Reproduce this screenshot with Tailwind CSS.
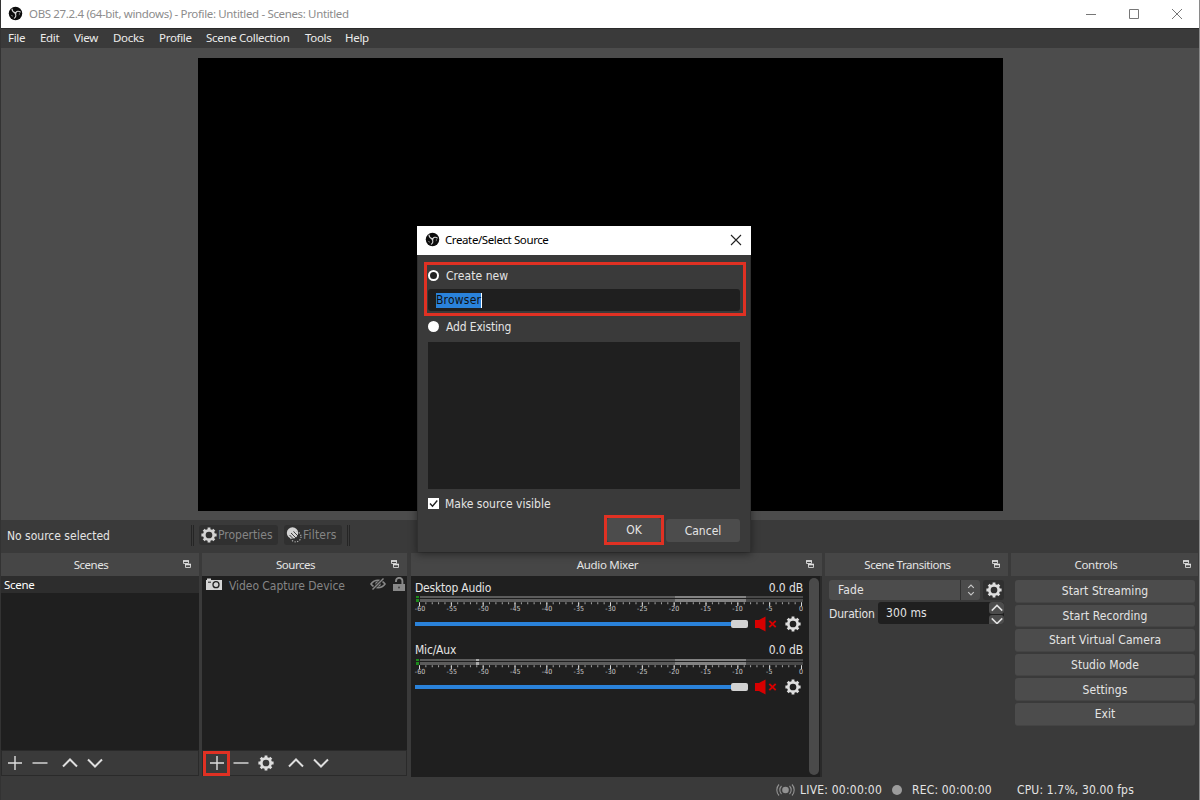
<!DOCTYPE html>
<html lang="en">
<head>
<meta charset="utf-8">
<title>OBS 27.2.4</title>
<script src="https://cdn.jsdelivr.net/npm/@tailwindcss/browser@4"></script>
</head>
<body class="w-[1200px] h-[800px] overflow-hidden bg-[#3a3a3a] font-['DejaVu_Sans_Condensed','DejaVu_Sans',sans-serif] [font-stretch:condensed] text-[12px] leading-4 text-[#e4e4e4] whitespace-nowrap cursor-default">
<svg width="0" height="0" class="absolute">
  <defs>
    <symbol id="gear" viewBox="0 0 16 16"><circle cx="8" cy="8" r="4.700" fill="none" stroke="currentColor" stroke-width="2.700"/><g stroke="currentColor" stroke-width="2.800"><path d="M8 .4v3M8 12.600v3M.4 8h3M12.600 8h3M2.700 2.700l2.100 2.100M11.200 11.200l2.100 2.100M2.700 13.300l2.100-2.100M11.200 4.800l2.100-2.100"/></g></symbol>
    <symbol id="obs" viewBox="0 0 16 16"><circle cx="8" cy="8" r="7.200" fill="#0c0c0c"/><g fill="none" stroke="#d8d8d8" stroke-width="1.200" stroke-linecap="round"><path d="M4.300 3.300c.1 2 1.200 3.500 3.400 3.900M8.200 7.300c1-1.900 3-2.200 4.900-1M7.700 8.200c1.300 1.800.6 3.700-.9 4.700"/></g><circle cx="8" cy="7.500" r="1.100" fill="#d8d8d8"/><path d="M3.300 9.500a2.200 2.200 0 0 0 2 1.300" fill="none" stroke="#999" stroke-width=".8"/><path d="M11.800 9.800a2.300 2.300 0 0 0 .3-2.200" fill="none" stroke="#999" stroke-width=".8"/></symbol>
    <symbol id="float" viewBox="0 0 8 8"><path d="M.5 1h5v2.500h-5z" fill="#464646" stroke="#c8c8c8"/><path d="M0 1h6" stroke="#e0e0e0" stroke-width="1.600"/><path d="M2.500 4.500h5v3h-5z" fill="#464646" stroke="#c8c8c8"/><path d="M2 4.500h6" stroke="#e0e0e0" stroke-width="1.600"/></symbol>
    <symbol id="plus" viewBox="0 0 16 16"><path d="M8 1v14M1 8h14" stroke="currentColor" stroke-width="1.400"/></symbol>
    <symbol id="minus" viewBox="0 0 16 16"><path d="M.5 8h15" stroke="currentColor" stroke-width="1.400"/></symbol>
    <symbol id="up" viewBox="0 0 16 16"><path d="M1 11.500l7-7 7 7" fill="none" stroke="currentColor" stroke-width="2"/></symbol>
    <symbol id="down" viewBox="0 0 16 16"><path d="M1 4.500l7 7 7-7" fill="none" stroke="currentColor" stroke-width="2"/></symbol>
    <symbol id="muted" viewBox="0 0 24 16"><path d="M1 4h4L11.500.5v15L5 12H1z" fill="#d80000"/><path d="M15.300 4.800l6.400 6.400M21.700 4.800l-6.400 6.400" stroke="#d80000" stroke-width="1.900"/></symbol>
    <symbol id="ticks" viewBox="0 0 390 6"><path d="M4 1.200h384" stroke="#a8a8a8" stroke-width="2" stroke-dasharray="1 5.367"/><path d="M4 2.200h384" stroke="#dcdcdc" stroke-width="3.400" stroke-dasharray="1 30.833"/></symbol>
  </defs>
</svg>
<div class="relative flex flex-col w-[1200px] h-[800px] border-l border-r border-l-[#333] border-r-[#8a8a8a]">
  <header class="flex items-center h-7 shrink-0 bg-white pl-[7px] pb-px font-['Noto_Sans',sans-serif] text-[11.5px] tracking-[-0.35px] text-[#8c8c8c]">
    <svg class="size-[15px] mr-[6px]"><use href="#obs"/></svg>
    <span class="pt-px">OBS 27.2.4 (64-bit, windows) - Profile: Untitled - Scenes: Untitled</span>
    <div class="ml-auto flex items-center gap-[31px] pr-4">
      <svg class="w-3 h-3" viewBox="0 0 12 12"><path d="M1 6.500h10" stroke="#777"/></svg>
      <svg class="w-3 h-3" viewBox="0 0 12 12"><path d="M1.500 1.500h9v9h-9z" fill="none" stroke="#777"/></svg>
      <svg class="w-3 h-3" viewBox="0 0 12 12"><path d="M1 1l10 10M11 1L1 11" stroke="#777"/></svg>
    </div>
  </header>
  <nav class="flex items-center h-5 shrink-0 border-t border-[#2a2a2a] bg-[#3a3a3a] pl-[7px] pb-px font-['Noto_Sans',sans-serif] text-[11.5px] tracking-[-0.3px] text-[#ececec]">
    <span class="w-8">File</span><span class="w-[34px]">Edit</span><span class="w-[39px]">View</span><span class="w-[46px]">Docks</span><span class="w-[47px]">Profile</span><span class="w-[99px]">Scene Collection</span><span class="w-10">Tools</span><span>Help</span>
  </nav>
  <main class="h-[472px] shrink-0 bg-[#4c4c4c] pl-[197px] pt-[10px]"><div class="w-[805px] h-[453px] bg-black"></div></main>

  <section class="flex items-center h-[33px] shrink-0 pl-[6px] pb-[3px]">
    <span class="w-[184px] pt-px">No source selected</span>
    <i class="w-[3px] h-[21px] border-x border-[#252525] mr-[5px]"></i>
    <div class="flex items-center w-[79px] h-5 rounded-[3px] bg-[#303030] pl-0.5 text-[#858585]"><svg class="size-4 mr-px text-[#d4d4d4]"><use href="#gear"/></svg>Properties</div>
    <div class="flex items-center w-[58px] h-5 rounded-[3px] bg-[#303030] ml-[6px] pl-[2px] text-[#858585] tracking-[0.2px]">
      <svg class="size-4 mr-px" viewBox="0 0 16 16"><circle cx="6.500" cy="6" r="5.700" fill="#d4d4d4"/><circle cx="9.800" cy="9.700" r="5.200" fill="none" stroke="#b5b5b5" stroke-width="1.200" stroke-dasharray="1.200 1.500"/><path d="M5 6l5.500 5.500M7.500 4.500l4.500 4.500M3.500 8l4 4" stroke="#303030" stroke-width=".9"/></svg>Filters</div>
    <i class="w-[3px] h-[21px] border-x border-[#252525] ml-[5px]"></i>
  </section>

  <div class="flex h-[224px] shrink-0">
    <section class="flex flex-col w-[198px] mr-[3px]">
      <h2 class="relative flex items-center justify-center h-[23px] shrink-0 bg-[#464646] pr-[18px] font-['Noto_Sans',sans-serif] text-[11.5px] tracking-[-0.45px]">Scenes<svg class="absolute right-[8px] top-[7px] size-2"><use href="#float"/></svg></h2>
      <div class="h-[174px] bg-[#1f1f1f]"><div class="h-[17px] leading-[18px] bg-[#2d2d2d] pl-[3px] font-['Noto_Sans',sans-serif] text-[11.5px] tracking-[-0.3px] text-white">Scene</div></div>
      <div class="flex items-center h-[26px] border border-[#2a2a2a] pl-[5px] text-[#dedede]"><svg class="size-4 mr-[9px]"><use href="#plus"/></svg><svg class="size-4 mr-[14px]"><use href="#minus"/></svg><svg class="size-4 mr-[9px]"><use href="#up"/></svg><svg class="size-4"><use href="#down"/></svg></div>
    </section>
    <section class="flex flex-col w-[205px] mr-1">
      <h2 class="relative flex items-center justify-center h-[23px] shrink-0 bg-[#464646] pr-[18px] font-['Noto_Sans',sans-serif] text-[11.5px] tracking-[-0.5px]">Sources<svg class="absolute right-[8px] top-[7px] size-2"><use href="#float"/></svg></h2>
      <div class="h-[174px] bg-[#1f1f1f]"><div class="flex items-center h-[18px] pl-1 text-[#858585]">
        <svg class="w-4 h-3 mr-[7px] -mt-0.5" viewBox="0 0 16 12"><path d="M0 2h1V.5h4V2h11v10H0z" fill="#d4d4d4"/><circle cx="10" cy="6.700" r="3" fill="#d4d4d4" stroke="#222" stroke-width="1.300"/><path d="M2 4.200h3" stroke="#222"/></svg>
        <span class="mt-0.5 tracking-[-0.05px]">Video Capture Device</span>
        <svg class="w-4 h-3 ml-auto mr-[7px] -mt-0.5" viewBox="0 0 16 12"><path d="M1 6c3.500-5 10.500-5 14 0-3.500 5-10.500 5-14 0z" fill="none" stroke="#888" stroke-width="1.600"/><circle cx="8" cy="6" r="2.700" fill="#888"/><path d="M2.500 11.500l11-11" stroke="#1f1f1f" stroke-width="3"/><path d="M2.500 11.500l11-11" stroke="#888" stroke-width="1.400"/></svg>
        <svg class="w-3 h-[14px] mr-[2px] -mt-0.5" viewBox="0 0 12 14"><path d="M0 7h12v7H0z" fill="#888"/><path d="M3 5V4a3.200 3.200 0 0 1 6.400 0v4" fill="none" stroke="#888" stroke-width="1.900"/><circle cx="6" cy="10.500" r="1" fill="#444"/></svg>
      </div></div>
      <div class="flex items-center h-[26px] border border-[#2a2a2a] text-[#dedede]"><div class="flex items-center justify-center w-[27px] h-[25px] shrink-0 border-[3px] border-[#e03123]"><svg class="size-4 shrink-0"><use href="#plus"/></svg></div><svg class="size-4 ml-[3px] mr-[9px]"><use href="#minus"/></svg><svg class="size-4 mr-[14px]"><use href="#gear"/></svg><svg class="size-4 mr-[9px]"><use href="#up"/></svg><svg class="size-4"><use href="#down"/></svg></div>
    </section>
    <section class="flex flex-col w-[411px] mr-[3px]">
      <h2 class="relative flex items-center justify-center h-[23px] shrink-0 bg-[#464646] pr-[18px] font-['Noto_Sans',sans-serif] text-[11.5px] tracking-[-0.3px]">Audio Mixer<svg class="absolute right-[8px] top-[7px] size-2"><use href="#float"/></svg></h2>
      <div class="relative flex justify-between h-[201px] bg-[#1f1f1f] border-r-2 border-[#2a2a2a] pl-1 pr-px">
        <div class="w-[388px] pt-[3px]">
          <div class="h-[62.5px]">
            <div class="flex justify-between h-[17px] leading-[18px]"><span class="tracking-[-0.2px]">Desktop Audio</span><span class="tracking-[-0.1px]">0.0 dB</span></div>
            <svg class="block w-[388px] h-[6px]" viewBox="0 0 388 6" shape-rendering="crispEdges"><path d="M1 0h3v2H1zM1 3h3v3H1z" fill="#1c8a1c"/><path d="M5 0h255v2H5zM5 3h255v3H5z" fill="#5c5c5c"/><path d="M260 0h71v2h-71zM260 3h71v3h-71z" fill="#828282"/><path d="M331 0h57v2h-57zM331 3h57v3h-57z" fill="#484848"/></svg>
            <svg class="block w-[390px] h-[6px] overflow-visible"><use href="#ticks"/></svg>
            <div class="flex justify-between pl-[5px] pr-[2px] -mt-[2px] h-[7px] leading-[7px] text-[7px] text-[#c8c8c8] [&>span]:w-0 [&>span]:flex [&>span]:justify-center"><span>-60</span><span>-55</span><span>-50</span><span>-45</span><span>-40</span><span>-35</span><span>-30</span><span>-25</span><span>-20</span><span>-15</span><span>-10</span><span>-5</span><span>0</span></div>
            <div class="flex items-center h-4 mt-[3px]"><i class="w-[316px] h-1 bg-[#2a82da]"></i><i class="w-[17px] h-2 rounded-[2px] bg-[#d2d2d2]"></i><svg class="w-6 h-4 ml-1.5"><use href="#muted"/></svg><svg class="size-4 ml-[7px] text-[#dedede]"><use href="#gear"/></svg></div>
          </div>
          <div class="h-[62.5px]">
            <div class="flex justify-between h-[17px] leading-[17px]"><span class="tracking-[-0.2px]">Mic/Aux</span><span class="tracking-[-0.1px]">0.0 dB</span></div>
            <svg class="block w-[388px] h-[6px]" viewBox="0 0 388 6" shape-rendering="crispEdges"><path d="M1 0h3v2H1zM1 3h3v3H1z" fill="#1c8a1c"/><path d="M5 0h255v2H5zM5 3h255v3H5z" fill="#5c5c5c"/><path d="M260 0h71v2h-71zM260 3h71v3h-71z" fill="#828282"/><path d="M331 0h57v2h-57zM331 3h57v3h-57z" fill="#484848"/><path d="M61 0h3v2h-3zM61 3h3v3h-3z" fill="#ababab"/></svg>
            <svg class="block w-[390px] h-[6px] overflow-visible"><use href="#ticks"/></svg>
            <div class="flex justify-between pl-[5px] pr-[2px] -mt-[2px] h-[7px] leading-[7px] text-[7px] text-[#c8c8c8] [&>span]:w-0 [&>span]:flex [&>span]:justify-center"><span>-60</span><span>-55</span><span>-50</span><span>-45</span><span>-40</span><span>-35</span><span>-30</span><span>-25</span><span>-20</span><span>-15</span><span>-10</span><span>-5</span><span>0</span></div>
            <div class="flex items-center h-4 mt-[3px]"><i class="w-[316px] h-1 bg-[#2a82da]"></i><i class="w-[17px] h-2 rounded-[2px] bg-[#d2d2d2]"></i><svg class="w-6 h-4 ml-1.5"><use href="#muted"/></svg><svg class="size-4 ml-[7px] text-[#dedede]"><use href="#gear"/></svg></div>
          </div>
        </div>
        <i class="w-[10px] h-[197px] mt-[2px] rounded-full bg-[#4a4a4a]"></i>
      </div>
    </section>
    <section class="flex flex-col w-[183px] mr-[3px]">
      <h2 class="relative flex items-center justify-center h-[23px] shrink-0 bg-[#464646] pr-[18px] font-['Noto_Sans',sans-serif] text-[11.5px] tracking-[-0.45px]">Scene Transitions<svg class="absolute right-[8px] top-[7px] size-2"><use href="#float"/></svg></h2>
      <div class="flex pt-1 pl-1">
        <div class="flex items-center w-[151px] h-5 rounded-[3px] bg-[#4c4c4c] pl-[9px] tracking-[0.1px]">Fade<div class="ml-auto flex items-center justify-center w-5 h-5 border-l border-[#303030]"><svg class="w-2 h-3" viewBox="0 0 8 12"><path d="M1.200 3.800L4 1l2.800 2.800M1.200 8.200L4 11l2.800-2.800" fill="none" stroke="#c8c8c8" stroke-width="1.100"/></svg></div></div>
        <div class="flex items-center justify-center w-[21px] h-5 ml-[3px] rounded-[3px] bg-[#303030] text-[#dedede]"><svg class="size-4"><use href="#gear"/></svg></div>
      </div>
      <div class="flex items-center pt-[2px] pl-1"><span class="w-[49px] tracking-[-0.15px] mt-0.5">Duration</span>
        <div class="flex items-center w-[126px] h-[22px] rounded-[3px] bg-[#1f1f1f] pl-[8px] overflow-hidden tracking-[0.1px]">300 ms<div class="ml-auto flex flex-col gap-px w-[15px] h-[22px] text-[#e0e0e0]"><div class="flex items-center justify-center flex-1 rounded-[3px] bg-[#4c4c4c]"><svg class="size-3"><use href="#up"/></svg></div><div class="flex items-center justify-center flex-1 rounded-[3px] bg-[#4c4c4c]"><svg class="size-3"><use href="#down"/></svg></div></div></div>
      </div>
    </section>
    <section class="flex flex-col w-[187px]">
      <h2 class="relative flex items-center justify-center h-[23px] shrink-0 bg-[#464646] pr-[17px] font-['Noto_Sans',sans-serif] text-[11.5px] tracking-[-0.3px]">Controls<svg class="absolute right-[7px] top-[7px] size-2"><use href="#float"/></svg></h2>
      <div class="flex flex-col gap-[2px] pt-1 pl-1 pr-[3px] *:flex *:items-center *:justify-center *:h-[22.6px] *:pt-px *:rounded-[3px] *:bg-[#4c4c4c] *:border-b *:border-[#444] tracking-[0.07px]">
        <div>Start Streaming</div><div>Start Recording</div><div>Start Virtual Camera</div><div>Studio Mode</div><div>Settings</div><div>Exit</div>
      </div>
    </section>
  </div>

  <footer class="flex items-center flex-1 pt-[3px] pl-[775px]">
    <svg class="w-[19px] h-3 mr-[5px]" viewBox="0 0 19 12" fill="none" stroke="#929292"><circle cx="9.500" cy="6" r="3.300" fill="#929292" stroke="none"/><path d="M5.500 2a5.600 5.600 0 0 0 0 8M3 .5a8 8 0 0 0 0 11M13.500 2a5.600 5.600 0 0 1 0 8M16 .5a8 8 0 0 1 0 11" stroke-width="1.100"/></svg>
    <span class="w-[92px] tracking-[0.22px]">LIVE: 00:00:00</span>
    <i class="size-[10px] mr-[10px] rounded-full bg-[#9c9c9c]"></i>
    <span class="w-[105px] tracking-[0.18px]">REC: 00:00:00</span>
    <span class="tracking-[0.15px]">CPU: 1.7%, 30.00 fps</span>
  </footer>

  <div class="absolute left-[416px] top-[226px] flex flex-col w-[334px] h-[326px] bg-[#3a3a3a] border-x border-[#303030] shadow-[0_2px_8px_rgba(0,0,0,0.45)]">
    <div class="flex items-center h-[29px] -mx-px shrink-0 bg-white pl-2 pr-[9px] pb-[2px] font-['Noto_Sans',sans-serif] text-[11.5px] tracking-[-0.4px] text-black"><svg class="size-[15px] mr-[5px]"><use href="#obs"/></svg><span class="pt-px">Create/Select Source</span><svg class="size-3 ml-auto" viewBox="0 0 12 12"><path d="M1 1l10 10M11 1L1 11" stroke="#222" stroke-width="1.100"/></svg></div>
    <div class="flex flex-col shrink-0 w-[322px] h-[54px] ml-1.5 mt-[7px] border-[3px] border-[#e03123] pl-px">
      <div class="flex items-center h-[21px] shrink-0 tracking-[0.05px]"><i class="size-[11px] mr-[7px] mb-px rounded-full border-[2.5px] border-white bg-[#222]"></i>Create new</div>
      <div class="flex items-center w-[312px] h-[22px] mt-[3px] rounded-[3px] bg-[#1f1f1f] pl-2"><span class="h-[15px] leading-[15px] bg-[#2a82da] text-[#101010] tracking-[0.2px] border-r border-white">Browser</span></div>
    </div>
    <div class="flex items-center h-[22px] shrink-0 ml-[10px] tracking-[-0.15px]"><i class="size-[11px] mr-[7px] mb-px rounded-full bg-white"></i>Add Existing</div>
    <div class="w-[312px] h-[147px] shrink-0 mt-1 ml-[10px] bg-[#1f1f1f]"></div>
    <div class="flex items-center h-4 mt-[7px] ml-[10px]"><svg class="size-[11px] mr-[6px] mb-px" viewBox="0 0 11 11"><path d="M0 0h11v11H0z" fill="#fff"/><path d="M2 5.500l2.500 2.700L9.300 2.500" fill="none" stroke="#222" stroke-width="1.400"/></svg>Make source visible</div>
    <div class="flex items-center mt-[3px] ml-[186px]"><div class="flex w-[60px] h-[30px] border-[3px] border-[#e03123]"><span class="flex-1 bg-[#4c4c4c] rounded-[3px] text-center leading-[25px]">OK</span></div><div class="w-[74px] h-[23px] ml-[2px] rounded-[3px] bg-[#4c4c4c] text-center leading-[24px]">Cancel</div></div>
  </div>
</div>
</body>
</html>
